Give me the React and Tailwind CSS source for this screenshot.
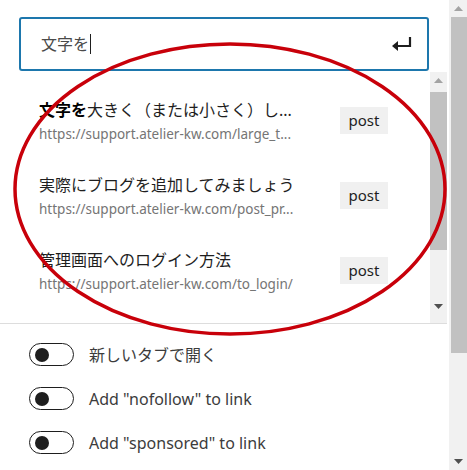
import React from 'react';

const FONT = { fontFamily: '"Noto Sans", "Noto Sans CJK JP", sans-serif' };

const results = [
  { bold: '文字を', rest: '大きく（または小さく）し...', url: 'https://support.atelier-kw.com/large_t...' },
  { bold: '', rest: '実際にブログを追加してみましょう', url: 'https://support.atelier-kw.com/post_pr...' },
  { bold: '', rest: '管理画面へのログイン方法', url: 'https://support.atelier-kw.com/to_login/' },
];

const toggles = ['新しいタブで開く', 'Add "nofollow" to link', 'Add "sponsored" to link'];

function ArrowUp() {
  return (
    <div className="h-[17px] flex items-center justify-center">
      <svg width="9" height="5" viewBox="0 0 9 5"><path d="M0 5L4.5 0L9 5Z" fill="#a3a3a3" /></svg>
    </div>
  );
}

function ArrowDown() {
  return (
    <div className="h-[17px] flex items-center justify-center">
      <svg width="9" height="5" viewBox="0 0 9 5"><path d="M0 0L4.5 5L9 0Z" fill="#505050" /></svg>
    </div>
  );
}

export default function App() {
  return (
    <div className="relative w-[467px] h-[470px] overflow-hidden bg-white flex text-[#1e1e1e]" style={FONT}>
      {/* main panel */}
      <div className="w-[449px] flex flex-col">
        <div className="pt-[17px] pl-[19px] pr-[20px]">
          <div className="h-[54px] border-2 border-[#1d77ad] rounded-[3px] flex items-center pl-[20px] pr-[14px]">
            <span className="text-[16px] text-[#4a4a4a]">文字を</span>
            <span className="w-px h-[20px] bg-[#1e1e1e] ml-px" />
            <div className="flex-1" />
            <svg width="22" height="18" viewBox="0 0 22 18">
              <path d="M19 2v9H5" fill="none" stroke="#1e1e1e" strokeWidth="2.2" />
              <path d="M1 11l6-5v10z" fill="#1e1e1e" />
            </svg>
          </div>
        </div>

        <div className="flex h-[251px] mt-[1px] w-[447px]">
          <div className="flex-1 flex flex-col pt-[26px]">
            {results.map((r, i) => (
              <div key={i} className="h-[77px] flex items-start pl-[39px]">
                <div className="w-[262px] flex flex-col">
                  <div className="text-[16px] leading-[25px] whitespace-nowrap overflow-hidden text-[#1e1e1e]">
                    {r.bold && <b className="font-bold text-black">{r.bold}</b>}
                    {r.rest}
                  </div>
                  <div className="text-[13.5px] leading-[23px] whitespace-nowrap overflow-hidden text-[#757575]">{r.url}</div>
                </div>
                <div className="ml-[39px] mt-[9px] h-[27px] w-[48px] bg-[#f0f0f0] flex items-center justify-center text-[15px] text-[#1e1e1e]">
                  post
                </div>
              </div>
            ))}
          </div>
          <div className="w-[17px] bg-[#f1f1f1] flex flex-col">
            <ArrowUp />
            <div className="h-[158px] bg-[#c1c1c1] mt-[3px]" />
            <div className="flex-1" />
            <ArrowDown />
            <div className="h-[8px]" />
          </div>
        </div>

        <div className="w-[447px] h-px bg-[#dddddd]" />

        <div className="flex flex-col pt-[19px] gap-[21px] pl-[29px]">
          {toggles.map((t) => (
            <div key={t} className="flex items-center h-[23px]">
              <div className="w-[45px] h-[23px] rounded-full border-[1.5px] border-[#1e1e1e] flex items-center pl-[5px]">
                <div className="w-[14px] h-[14px] rounded-full bg-[#1e1e1e]" />
              </div>
              <span className="ml-[15px] text-[16px] text-[#3c3c3c]">{t}</span>
            </div>
          ))}
        </div>
      </div>

      {/* outer scrollbar */}
      <div className="w-[18px] bg-[#f1f1f1] flex flex-col">
        <ArrowUp />
        <div className="h-[336px] bg-[#c1c1c1] ml-[2px]" />
        <div className="flex-1" />
        <ArrowDown />
      </div>

      {/* annotation ellipse */}
      <svg className="absolute left-0 top-0 pointer-events-none" width="467" height="470">
        <ellipse cx="230" cy="189" rx="215" ry="145" fill="none" stroke="#c8000a" strokeWidth="3.5" />
      </svg>
    </div>
  );
}
